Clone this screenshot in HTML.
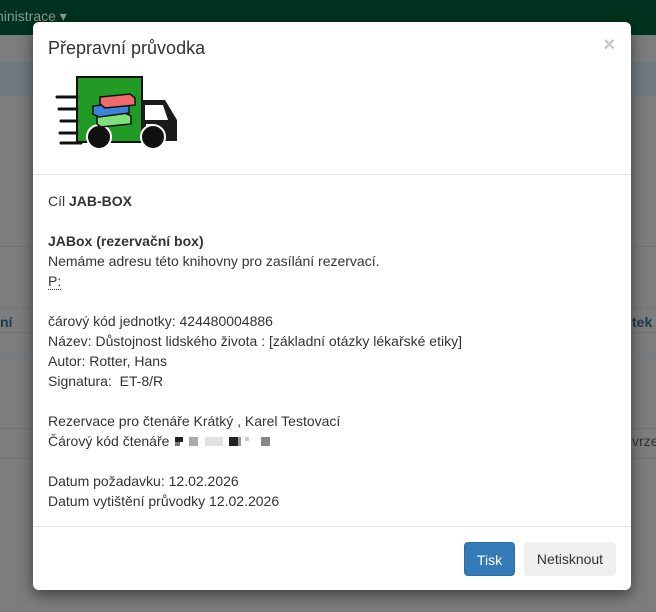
<!DOCTYPE html>
<html><head><meta charset="utf-8"><style>
*{margin:0;padding:0;box-sizing:border-box}
body{width:656px;height:612px;overflow:hidden;position:relative;background:#7d7d7d;font-family:"Liberation Sans",sans-serif;font-size:14px;color:#333}
.nav{position:absolute;left:0;top:0;width:656px;height:35px;background:#00331f;color:#8a9a92;font-size:14px}
.nav span{position:absolute;left:-4px;top:8px}
.bg1{position:absolute;left:0;top:62px;width:656px;height:34px;background:#6e7a80}
.line{position:absolute;left:0;width:656px;height:1px;background:#737373}
.modal{position:absolute;left:33px;top:22px;width:598px;height:568px;background:#fff;border-radius:6px;box-shadow:0 5px 15px rgba(0,0,0,.5)}
.hdr{position:absolute;left:0;top:0;width:100%;height:153px;border-bottom:1px solid #e5e5e5}
.title{position:absolute;left:15px;top:16px;font-size:18px;color:#333}
.x{position:absolute;right:16px;top:12px;font-size:20px;font-weight:bold;color:#c6c6c6}
.body{position:absolute;left:15px;top:169px;line-height:20px;color:#333}
.ftr{position:absolute;left:0;top:504px;width:100%;border-top:1px solid #e5e5e5}
.btn{position:absolute;top:520px;height:34px;border-radius:4px;font-size:14px;line-height:34px;text-align:center}
</style></head><body>
<div class="nav"><span>ninistrace ▾</span></div>
<div class="bg1"></div>
<div class="line" style="top:246px"></div>
<div class="line" style="top:308px;background:#777"></div>
<div style="position:absolute;left:0;top:314px;font-weight:bold;color:#1d3a52;font-size:14px">ní</div>
<div style="position:absolute;left:632px;top:314px;font-weight:bold;color:#1d3a52;font-size:14px">tek</div>
<div class="line" style="top:332px"></div>
<div class="line" style="top:356px;background:#6a7d88"></div>
<div style="position:absolute;left:632px;top:433px;color:#333;font-size:14px">vrze</div>
<div class="line" style="top:428px"></div>
<div class="line" style="top:458px"></div>
<div class="modal">
<div class="hdr">
<div class="title">Přepravní průvodka</div>
<div class="x">×</div>
<svg style="position:absolute;left:22px;top:53px" width="130" height="80" viewBox="0 0 130 80">
<rect x="22" y="2" width="65" height="65" fill="#229a26" stroke="#111" stroke-width="2"/>
<path d="M87 25h23l12 20v21h-35z" fill="#1b1b1b"/>
<path d="M90 30h18l5 15h-23z" fill="#fff"/>
<rect x="91" y="49" width="6" height="2" fill="#fff"/>
<g stroke="#111" stroke-width="3" stroke-linecap="round"><line x1="2" y1="22" x2="22" y2="22"/><line x1="4" y1="34" x2="22" y2="34"/><line x1="6" y1="46" x2="22" y2="46"/><line x1="5" y1="58" x2="22" y2="58"/><line x1="6" y1="68" x2="26" y2="68"/></g>
<circle cx="44" cy="62" r="12" fill="#111" stroke="#fff" stroke-width="2"/>
<circle cx="98" cy="62" r="12" fill="#111" stroke="#fff" stroke-width="2"/>
<path d="M42 40l28-2 6 3v8l-30 3-4-3z" fill="#7de07d" stroke="#111" stroke-width="1.5"/>
<path d="M38 31l30-3 6 3v7l-30 4-6-3z" fill="#3b84d9" stroke="#111" stroke-width="1.5"/>
<path d="M45 22l30-3 5 4v7l-30 3-5-4z" fill="#ef6a6a" stroke="#111" stroke-width="1.5"/>
</svg>
</div>
<div class="body">
Cíl <b>JAB-BOX</b><br><br>
<b>JABox (rezervační box)</b><br>
Nemáme adresu této knihovny pro zasílání rezervací.<br>
<span style="border-bottom:1px dotted #333">P:</span><br><br>
čárový kód jednotky: 424480004886<br>
Název: Důstojnost lidského života : [základní otázky lékařské etiky]<br>
Autor: Rotter, Hans<br>
Signatura:&nbsp; ET-8/R<br><br>
Rezervace pro čtenáře Krátký , Karel Testovací<br>
Čárový kód čtenáře <span style="display:inline-block;width:100px;height:10px;vertical-align:middle;position:relative">
<i style="position:absolute;left:2px;top:0;width:8px;height:5px;background:#222"></i><i style="position:absolute;left:2px;top:5px;width:5px;height:4px;background:#777"></i>
<i style="position:absolute;left:16px;top:0;width:9px;height:9px;background:#aaa"></i>
<i style="position:absolute;left:32px;top:0;width:18px;height:9px;background:#e2e2e2"></i>
<i style="position:absolute;left:56px;top:0;width:9px;height:9px;background:#222"></i><i style="position:absolute;left:65px;top:0;width:3px;height:9px;background:#999"></i>
<i style="position:absolute;left:72px;top:0;width:4px;height:4px;background:#ccc"></i>
<i style="position:absolute;left:88px;top:0;width:9px;height:9px;background:#888"></i></span><br><br>
Datum požadavku: 12.02.2026<br>
Datum vytištění průvodky 12.02.2026
</div>
<div class="ftr"></div>
<div class="btn" style="left:431px;width:51px;background:#337ab7;color:#fff;border:1px solid #2e6da4">Tisk</div>
<div class="btn" style="left:491px;width:92px;background:#efefef;color:#333">Netisknout</div>
</div>
</body></html>
